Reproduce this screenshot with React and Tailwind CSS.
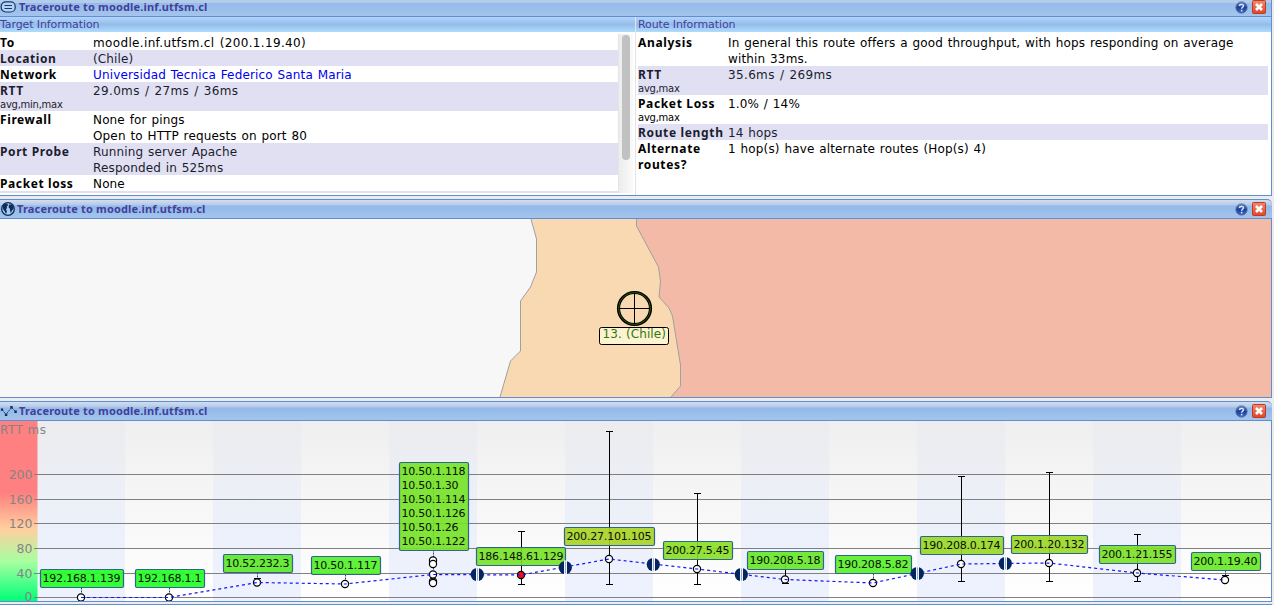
const TITLE = 'Traceroute to moodle.inf.utfsm.cl';

function HelpIcon() {
  return (
    <svg width="13" height="13" viewBox="0 0 13 13">
      <defs>
        <linearGradient id="help" x1="0" y1="0" x2="0" y2="1">
          <stop offset="0" stopColor="#6a90cc" />
          <stop offset="0.5" stopColor="#1d3f9c" />
          <stop offset="1" stopColor="#3f6ac8" />
        </linearGradient>
      </defs>
      <circle cx="6.5" cy="6.5" r="5.6" fill="url(#help)" stroke="#4a68a4" strokeWidth="0.9" />
      <path d="M4.6 5C4.6 2.9 8.5 2.9 8.4 4.9C8.3 6.3 6.6 6.2 6.6 7.8" fill="none" stroke="#e8eef8" strokeWidth="1.4" />
      <rect x="5.9" y="8.8" width="1.5" height="1.6" fill="#e8eef8" />
    </svg>
  );
}

function CloseIcon() {
  return (
    <svg width="14" height="14" viewBox="0 0 14 14">
      <defs>
        <linearGradient id="close" x1="0" y1="0" x2="0" y2="1">
          <stop offset="0" stopColor="#ef8a70" />
          <stop offset="1" stopColor="#e0452a" />
        </linearGradient>
      </defs>
      <rect x="0.5" y="0.5" width="13" height="13" rx="1" fill="url(#close)" stroke="#c03a20" />
      <path d="M4 4L10 10M10 4L4 10" stroke="#fff" strokeWidth="2.6" />
    </svg>
  );
}

function ListIcon() {
  return (
    <svg width="16" height="12" viewBox="0 0 16 12">
      <rect x="1.2" y="0.8" width="14" height="10.2" rx="4.5" fill="#b4d2f2" stroke="#123a6b" strokeWidth="1.2" />
      <path d="M4.500 4.500H12M4.500 7.500H12" stroke="#123a6b" strokeWidth="1.1" />
    </svg>
  );
}

function GlobeIcon() {
  return (
    <svg width="15" height="14" viewBox="0 0 15 14">
      <circle cx="8" cy="7" r="6.3" fill="#a9cbee" stroke="#0c2f5e" strokeWidth="1.3" />
      <path d="M2.600 3.200L5 1.600L7.200 1.800L8.200 3.200L6.800 4.600L7 6L6 7.500L7 9.200L6 12L4.800 9.500L3 7Z" fill="#0c2f5e" />
      <path d="M9 2.500L12 2.400L13.700 5L13.200 7.500L12 8.300L11 11.200L10.100 9L9.900 6.800L8.600 5.600Z" fill="#0c2f5e" />
    </svg>
  );
}

function GraphIcon() {
  return (
    <svg width="17" height="12" viewBox="0 0 17 12">
      <path d="M2 4.500L6 9.500L11.500 2.500L15.500 6.500" fill="none" stroke="#173a6e" strokeWidth="0.9" strokeDasharray="2 0.6" />
      <path d="M0.900 3.500h2.200v2.200h-2.200zM4.900 8.500h2.400v2.400h-2.400zM10.300 1h2.400v2.400h-2.400zM14.400 5.500h2.400v2.400h-2.400z" fill="#0c2f5e" />
    </svg>
  );
}

function TitleBar({ icon, first, narrow }) {
  return (
    <div
      className={
        first
          ? 'flex h-[17px] shrink-0 items-center border-b border-[#5f8fd0] bg-[linear-gradient(#b4cbea_0px,#b4cbea_3px,#95bbea_3px,#a3c4ec_16px)] pr-[5px] pb-[2px]'
          : 'flex h-5 shrink-0 items-center rounded-tr-[5px] border-y border-[#5f8fd0] bg-[linear-gradient(#d3def0_0px,#b4c9e8_5px,#93b9e9_6px,#a3c4ec_18px)] pr-[6px]'
      }
    >
      <span className={narrow ? 'flex w-[15px] shrink-0 items-center' : 'flex w-[17px] shrink-0 items-center'}>{icon}</span>
      <h2 className="ml-[2px] flex-1 whitespace-nowrap font-['Noto_Sans','Open_Sans',sans-serif] text-[11px] leading-[14px] font-bold tracking-[0.16px] text-[#41409a]">
        {TITLE}
      </h2>
      <span className="flex items-center gap-[4px]">
        <HelpIcon />
        <CloseIcon />
      </span>
    </div>
  );
}

function Row({ label, note, values, link, shaded, wide, spread }) {
  return (
    <div className={shaded ? 'flex bg-[#e0e0f2] text-[#1c1c30]' : 'flex bg-white text-black'}>
      <div
        className={
          wide
            ? "w-[90px] shrink-0 pt-px font-['Noto_Sans','Open_Sans',sans-serif] font-bold tracking-[0.65px]"
            : "w-[93px] shrink-0 pt-px font-['Noto_Sans','Open_Sans',sans-serif] font-bold tracking-[0.6px]"
        }
      >
        <div className="-mb-px whitespace-pre-line">{label}</div>
        {note && (
          <div className="relative top-px h-[13px] font-['DejaVu_Sans',sans-serif] text-[10px] leading-[12px] font-normal tracking-[-0.25px]">{note}</div>
        )}
      </div>
      <div
        className={
          spread
            ? 'relative top-px whitespace-nowrap tracking-[0.35px] [word-spacing:1px]'
            : link
              ? 'relative top-px whitespace-nowrap tracking-[0.15px] text-[#0000ee] [word-spacing:0.8px]'
              : 'relative top-px whitespace-nowrap tracking-[0.15px] [word-spacing:0.8px]'
        }
      >
        {values.map((v) => (
          <div key={v}>{v}</div>
        ))}
      </div>
    </div>
  );
}

function InfoPanel() {
  return (
    <section className="flex h-[196px] flex-col border-r border-b border-[#5f8fd0] bg-white">
      <TitleBar icon={<ListIcon />} first />
      <div className="flex h-[15px] shrink-0 bg-[linear-gradient(#b4d4fb,#94bdea_50%,#b0dcfc)] text-[11px] leading-[15px] tracking-[-0.1px] text-[#41409a]">
        <div className="w-[635px] shrink-0">Target Information</div>
        <div className="flex-1 border-l border-[#dfe6f2] pl-[2px]">Route Information</div>
      </div>
      <div className="flex min-h-0 flex-1 text-[12px] leading-4">
        <div className="flex w-[635px] shrink-0 pt-[2px] pb-[2px]">
          <div className="w-[618px] overflow-hidden">
            <Row label="To" values={['moodle.inf.utfsm.cl (200.1.19.40)']} spread />
            <Row label="Location" values={['(Chile)']} shaded />
            <Row label="Network" values={['Universidad Tecnica Federico Santa Maria']} link />
            <Row label="RTT" note="avg,min,max" values={['29.0ms / 27ms / 36ms']} shaded spread />
            <Row label="Firewall" values={['None for pings', 'Open to HTTP requests on port 80']} />
            <Row label="Port Probe" values={['Running server Apache', 'Responded in 525ms']} shaded />
            <Row label="Packet loss" values={['None']} />
            <div className="h-2 bg-[#e0e0f2]" />
          </div>
          <div className="flex w-[15px] justify-center border-l border-[#e6e6e6] bg-[linear-gradient(90deg,#ececec,#fafafa)] pt-[1px]">
            <div className="h-[125px] w-2 rounded-full bg-[#c1c1c1]" />
          </div>
        </div>
        <div className="flex-1 border-l border-[#e4e4e4] pt-[2px] pr-[3px] pl-[2px]">
          <Row wide label="Analysis" values={['In general this route offers a good throughput, with hops responding on average', 'within 33ms.']} />
          <Row wide label="RTT" note="avg,max" values={['35.6ms / 269ms']} shaded spread />
          <Row wide label="Packet Loss" note="avg,max" values={['1.0% / 14%']} />
          <Row wide label="Route length" values={['14 hops']} shaded />
          <Row wide label={'Alternate\nroutes?'} values={['1 hop(s) have alternate routes (Hop(s) 4)']} />
        </div>
      </div>
    </section>
  );
}

const COAST = '531,0 536.5,20 536.5,53 530.5,68 520.5,82 520.5,132 510.5,142 500,178';
const BORDER = '636.5,0 636.5,7 658.5,48 660.5,62 659,78 669,89 672.5,97 680.5,146 680.5,167 671,178';

function MapPanel() {
  return (
    <section className="flex h-[199px] flex-col">
      <TitleBar icon={<GlobeIcon />} narrow />
      <div className="h-[179px] border-r border-b border-[#5f8fd0]">
        <svg width="1271" height="178" viewBox="0 0 1271 178" className="block">
          <rect width="1271" height="178" fill="#f7f7f7" />
          <polygon points={`${COAST} 1271,178 1271,0`} fill="#f8d9b2" />
          <polygon points={`${BORDER} 1271,178 1271,0`} fill="#f4baa8" />
          <polyline points={COAST} fill="none" stroke="#a0a0a0" />
          <polyline points={BORDER} fill="none" stroke="#a0a0a0" />
          <circle cx="634.5" cy="89.5" r="16" fill="none" stroke="#000" strokeWidth="3.2" />
          <circle cx="634.5" cy="89.5" r="16" fill="none" stroke="#2c5a08" strokeWidth="1" />
          <path d="M634.5 74V105M619 89.5H650" stroke="#000" />
          <rect x="599.5" y="108.500" width="69" height="17" rx="2" fill="#fdf3d2" stroke="#000" />
          <text x="602.5" y="118.800" textLength="63.500" fontFamily="DejaVu Sans, sans-serif" fontSize="12" fill="#2e7a0c">13. (Chile)</text>
        </svg>
      </div>
    </section>
  );
}

const GRID = [
  [200, 53.5],
  [160, 78.5],
  [120, 102.5],
  [80, 127.5],
  [40, 152.5],
  [0, 176.5],
];

// y values are measured from the top of the plot area
const HOPS = [
  { y: 176.5, ips: ['192.168.1.139'], x: 40.5, w: 83, top: 148.5, tw: 78, color: '#1fff20' },
  { y: 176.5, ips: ['192.168.1.1'], x: 135.5, w: 69, top: 148.5, tw: 64, color: '#1fff20' },
  { y: 161.5, ips: ['10.52.232.3'], x: 223.5, w: 69, top: 133.5, tw: 64, color: '#5ae826', tick: 157.5 },
  { y: 163, ips: ['10.50.1.117'], x: 311.5, w: 69, top: 135.5, tw: 64, color: '#50ee26' },
  {
    y: 153.5, extra: [139.5, 143, 160.5, 162], x: 399.500, w: 69, top: 41.5, tw: 64, color: '#76e224',
    ips: ['10.50.1.118', '10.50.1.30', '10.50.1.114', '10.50.1.126', '10.50.1.26', '10.50.1.122'],
  },
  { y: 154, range: [110.5, 163.5], ips: ['186.148.61.129'], x: 476.5, w: 89, top: 126.5, tw: 85, color: '#76e224', red: true },
  { y: 138, range: [10.5, 163.5], ips: ['200.27.101.105'], x: 564.5, w: 90, top: 106.5, tw: 85, color: '#a9d321' },
  { y: 148, range: [72.5, 163.5], ips: ['200.27.5.45'], x: 663.5, w: 69, top: 120.5, tw: 64, color: '#88de22' },
  { y: 158.5, range: [134.5, 162.5], ips: ['190.208.5.18'], x: 747.5, w: 76, top: 130.5, tw: 71, color: '#66e823' },
  { y: 162, ips: ['190.208.5.82'], x: 835.5, w: 76, top: 134.5, tw: 71, color: '#56f026' },
  { y: 143, range: [55.5, 160.5], ips: ['190.208.0.174'], x: 920.5, w: 83, top: 115.5, tw: 78, color: '#99d722' },
  { y: 142, range: [51.5, 160.5], ips: ['200.1.20.132'], x: 1011.5, w: 76, top: 114.5, tw: 71, color: '#9bd722' },
  { y: 152, range: [113.5, 160.5], ips: ['200.1.21.155'], x: 1099.5, w: 76, top: 124.5, tw: 71, color: '#7be023' },
  { y: 159, ips: ['200.1.19.40'], x: 1191.5, w: 69, top: 131.5, tw: 64, color: '#66e823', tick: 154.5 },
];

const hopX = (i) => 81 + i * 88;

const GATES = [[477, 153.5], [565, 146.5], [653, 143.5], [741, 153.5], [917, 152.5], [1005, 142.5]];

function Chart() {
  return (
    <svg width="1271" height="180" viewBox="0 0 1271 180" className="block" fontFamily="DejaVu Sans, sans-serif">
      <defs>
        <linearGradient id="plain" x1="0" y1="0" x2="0" y2="1">
          <stop offset="0" stopColor="#efefef" />
          <stop offset="1" stopColor="#ffffff" />
        </linearGradient>
        <linearGradient id="stripe" x1="0" y1="0" x2="0" y2="1">
          <stop offset="0" stopColor="#ececee" />
          <stop offset="0.5" stopColor="#ecf0f9" />
          <stop offset="1" stopColor="#eef2ff" />
        </linearGradient>
        <linearGradient id="scale" x1="0" y1="0" x2="0" y2="1">
          <stop offset="0" stopColor="#ff8080" />
          <stop offset="0.4" stopColor="#ff8080" />
          <stop offset="0.6" stopColor="#ffcf9f" />
          <stop offset="0.78" stopColor="#a8ffa0" />
          <stop offset="1" stopColor="#00ff78" />
        </linearGradient>
      </defs>
      <rect width="1271" height="180" fill="url(#plain)" />
      {[0, 2, 4, 6, 8, 10, 12].map((i) => (
        <rect key={i} x={37 + i * 88} width="88" height="180" fill="url(#stripe)" />
      ))}
      <rect width="37.5" height="180" fill="url(#scale)" />
      {GRID.map(([value, y]) => (
        <g key={value}>
          <path d={`M34 ${y}H1271`} stroke="#808080" />
          <text x="32.500" y={Math.min(y + 4.5, 179.800)} textAnchor="end" fontSize="12.500" fill="#858585">{value}</text>
        </g>
      ))}
      <text x="0" y="13" fontSize="12" textLength="46" fill="#858585">RTT ms</text>
      {HOPS.map((h, i) => (
        <g key={i}>
          <path d={`M${81.5 + i * 88} ${h.top + 18}V${h.y - 4}`} stroke="#1c4a80" strokeDasharray="2 1" />
          {h.range && (
            <path d={`M${81.5 + i * 88} ${h.range[0]}V${h.range[1]}m-3.500 0h7M${78 + i * 88} ${h.range[0]}h7`} stroke="#000" fill="none" />
          )}
        </g>
      ))}
      {HOPS.map((h, i) => (
        <g key={i}>
          <rect x={h.x} y={h.top} width={h.w} height={h.ips.length > 1 ? 88 : 18} rx="1.5" fill={h.color} fillOpacity="0.9" stroke="#2f648c" strokeWidth="1.2" />
          {h.ips.map((ip, n) => (
            <text key={ip} x={h.x + 2} y={h.top + 12.800 + n * 14} fontSize="11" textLength={ip.length === 10 ? h.tw - 7 : h.tw} fill="#061006">{ip}</text>
          ))}
        </g>
      ))}
      {HOPS.map((h, i) => (
        <g key={i} stroke="#000" strokeWidth="1.2" fill="#fff">
          {(h.extra || []).map((y) => (
            <circle key={y} cx={hopX(i)} cy={y} r="3.600" />
          ))}
          <circle cx={hopX(i)} cy={h.y} r="3.600" fill={h.red ? '#f01010' : '#fff'} />
          {h.tick && <path d={`M${78 + i * 88} ${h.tick}h7`} strokeWidth="1" />}
        </g>
      ))}
      <polyline points={HOPS.map((h, i) => `${hopX(i)},${h.y}`).join(' ')} fill="none" stroke="#1414ff" strokeWidth="1.2" strokeDasharray="3 3" />
      {GATES.map(([x, y]) => (
        <g key={x}>
          <circle cx={x + 0.3} cy={y} r="6.600" fill="#042660" />
          <path d={`M${x + 0.5} ${y - 7}v14`} stroke="#f2f6ff" strokeWidth="3" />
          <path d={`M${x + 0.5} ${y - 6}v12`} stroke="#9aa6c0" strokeWidth="1" />
        </g>
      ))}
    </svg>
  );
}

function GraphPanel() {
  return (
    <section className="flex h-[201px] flex-col">
      <TitleBar icon={<GraphIcon />} />
      <div className="h-[181px] border-r border-b border-[#5f8fd0]">
        <Chart />
      </div>
    </section>
  );
}

export default function App() {
  return (
    <main className="flex h-[605px] w-[1274px] flex-col overflow-hidden bg-[#ececec] pr-[2px] font-['DejaVu_Sans',sans-serif]">
      <div className="flex flex-col gap-[3px]">
        <InfoPanel />
        <MapPanel />
        <GraphPanel />
      </div>
      <div className="mt-[2px] h-px bg-[#5f8fd0]" />
    </main>
  );
}
